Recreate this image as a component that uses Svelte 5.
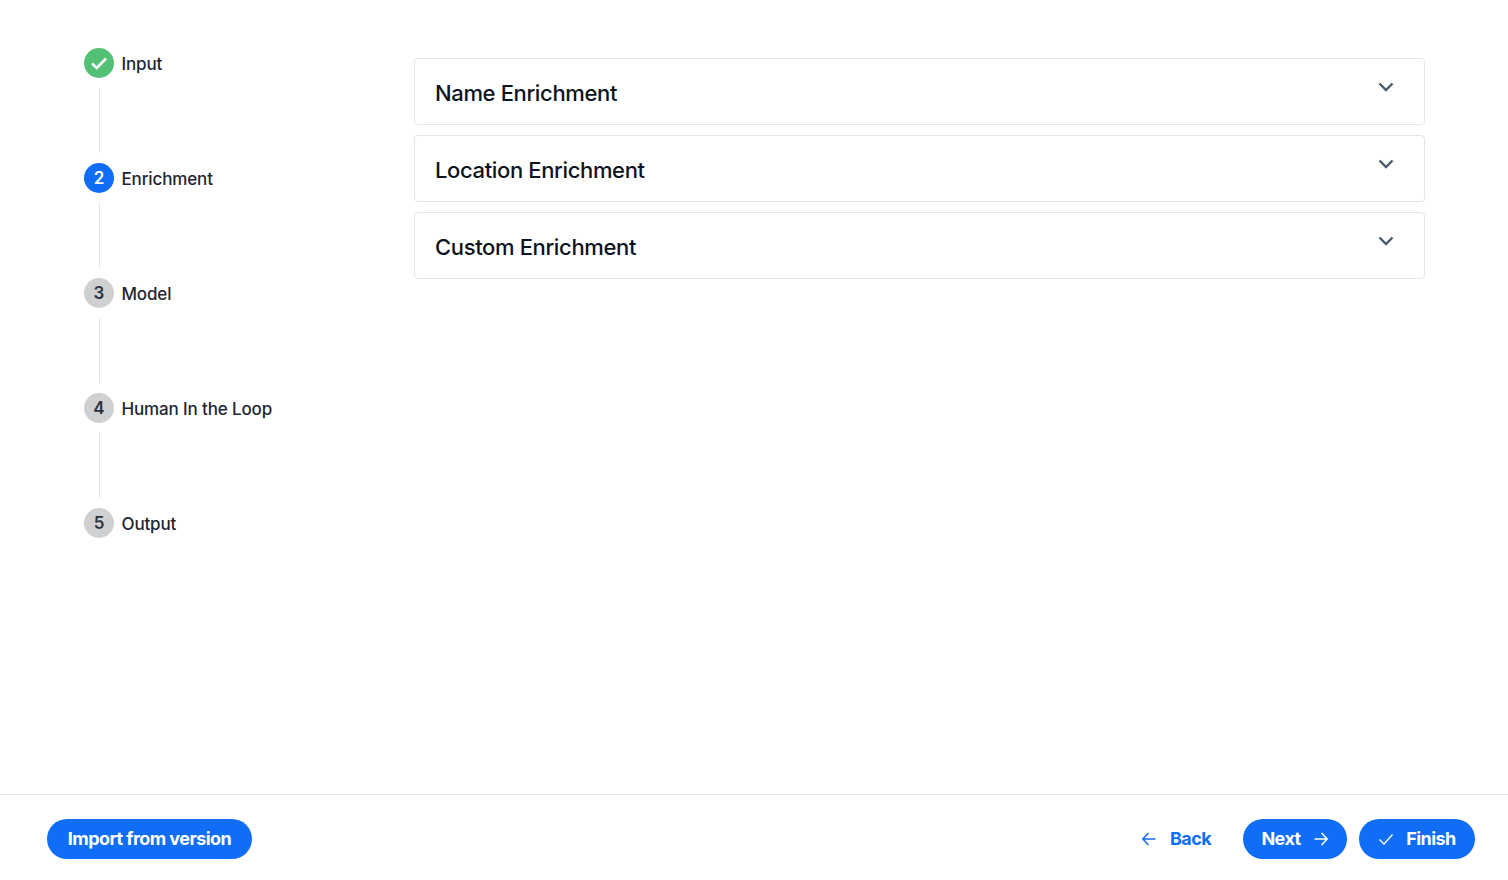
<script lang="ts">
  const steps = [
    { n: 1, label: 'Input', state: 'done' },
    { n: 2, label: 'Enrichment', state: 'active' },
    { n: 3, label: 'Model', state: 'todo' },
    { n: 4, label: 'Human In the Loop', state: 'todo' },
    { n: 5, label: 'Output', state: 'todo' }
  ];

  const sections = ['Name Enrichment', 'Location Enrichment', 'Custom Enrichment'];
</script>

<div class="page">
  <main class="content">
    <ol class="steps">
      {#each steps as step, i}
        <li class="step">
          <div class="step-head">
            <span class="dot {step.state}">
              {#if step.state === 'done'}
                <svg width="18" height="18" viewBox="0 0 18 18" fill="none">
                  <path d="M2 9.5 6.8 14 16 4.5" stroke="#fff" stroke-width="2.6" />
                </svg>
              {:else}
                {step.n}
              {/if}
            </span>
            <span class="label">{step.label}</span>
          </div>
          {#if i < steps.length - 1}<div class="line"></div>{/if}
        </li>
      {/each}
    </ol>

    <div class="cards">
      {#each sections as title}
        <section class="card">
          <h2>{title}</h2>
          <svg class="chevron" width="16" height="10" viewBox="0 0 16 10" fill="none">
            <path d="M1.5 1.5 8 8l6.5-6.5" stroke="#4a5a6c" stroke-width="2.4" />
          </svg>
        </section>
      {/each}
    </div>
  </main>

  <footer class="footer">
    <button class="btn primary import">Import from version</button>
    <div class="actions">
      <button class="btn ghost">
        <svg width="16" height="16" viewBox="0 0 16 16" fill="none">
          <path d="M14.5 8H2M7.5 2 1.8 8l5.7 6" stroke="#0f6ef5" stroke-width="1.5" />
        </svg>
        Back
      </button>
      <button class="btn primary next">
        Next
        <svg width="16" height="16" viewBox="0 0 16 16" fill="none">
          <path d="M1.5 8H14M8.5 2l5.7 6-5.7 6" stroke="#fff" stroke-width="1.5" />
        </svg>
      </button>
      <button class="btn primary finish">
        <svg width="16" height="16" viewBox="0 0 16 16" fill="none">
          <path d="M1.5 8.5 6 13l8.5-9.5" stroke="#fff" stroke-width="1.3" />
        </svg>
        Finish
      </button>
    </div>
  </footer>
</div>

<style>
  :global(body) { margin: 0; background: #fff; font-family: "Inter", sans-serif; }
  .page { height: 880px; display: flex; flex-direction: column; }
  .content { flex: 1; display: flex; min-height: 0; }

  .steps { flex: none; list-style: none; margin: 0; padding: 48px 0 0 84px; width: 414px; box-sizing: border-box; }
  .step-head { display: flex; align-items: center; gap: 8px; height: 30px; }
  .dot { width: 30px; height: 30px; border-radius: 50%; display: flex; align-items: center; justify-content: center; font-size: 17px; font-weight: 600; box-sizing: border-box; padding-bottom: 1px; }
  .dot.done { background: #52c175; }
  .dot.active { background: #0f6ef5; color: #fff; }
  .dot.todo { background: #cfd0d2; color: #2b3240; }
  .label { font-size: 17px; font-weight: 500; letter-spacing: -0.14px; color: #1e2533; padding-top: 1px; margin-left: -0.5px; }
  .line { width: 1px; height: 65px; background: #e2e3e5; margin: 10px 0 10px 15px; }

  .cards { flex: 1; padding: 58px 83px 0 0; display: flex; flex-direction: column; gap: 10px; }
  .card { height: 67px; box-sizing: border-box; border: 1px solid #e4e5e7; border-radius: 4px; padding: 0 30.5px 0 20px; display: flex; justify-content: space-between; }
  .card h2 { margin: 0; font-size: 22px; line-height: 69px; font-weight: 500; letter-spacing: -0.36px; color: #0d1320; }
  .chevron { margin-top: 23px; }

  .footer { height: 86px; flex: none; border-top: 1px solid #e4e5e7; box-sizing: border-box; padding: 24px 33px 0 47px; display: flex; justify-content: space-between; align-items: flex-start; }
  .actions { display: flex; align-items: center; }
  .btn { height: 40px; border: 0; border-radius: 20px; display: flex; align-items: center; font-family: "Inter", sans-serif; font-size: 18px; font-weight: 700; letter-spacing: -0.55px; padding: 0 0 1px; box-sizing: border-box; }
  .primary { background: #0f6ef5; color: #fff; }
  .ghost { background: none; color: #0f6ef5; gap: 13px; width: 124px; padding-left: 22px; }
  .import { width: 205px; justify-content: center; }
  .next { width: 104px; justify-content: center; gap: 12px; }
  .finish { width: 116px; margin-left: 12px; justify-content: center; gap: 12px; }
</style>
